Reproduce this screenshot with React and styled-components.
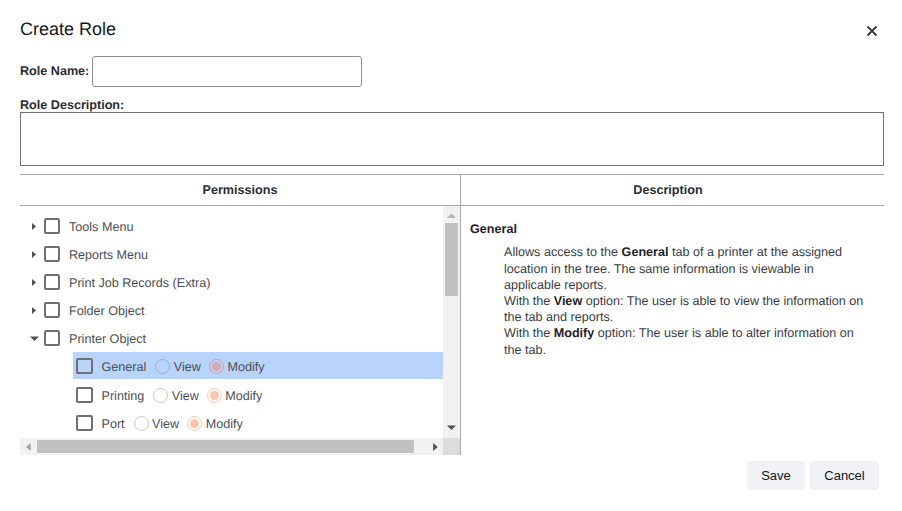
import React from "react";
import styled, { createGlobalStyle } from "styled-components";

const Global = createGlobalStyle`
  html, body { margin: 0; padding: 0; background: #fff; }
  body { font-family: "Liberation Sans", Arial, sans-serif; color: #1f2229; text-rendering: geometricPrecision; }
  * { box-sizing: border-box; }
`;

const Dialog = styled.div`
  width: 902px;
  height: 511px;
  padding: 0 18px 0 20px;
  display: flex;
  flex-direction: column;
  overflow: hidden;
`;
const TitleBar = styled.div`
  height: 56px;
  display: flex;
  justify-content: space-between;
  align-items: flex-start;
`;
const Title = styled.h1`
  margin: 19px 0 0;
  font-size: 18px;
  line-height: 21px;
  font-weight: 400;
  color: #14171f;
`;
const Close = styled.button`
  border: 0;
  background: none;
  padding: 0;
  margin: 25px 6px 0 0;
  width: 12px;
  height: 12px;
  display: block;
  color: #33363d;
  svg { display: block; }
`;
const NameRow = styled.div`
  display: flex;
  align-items: center;
  height: 31px;
  gap: 3px;
`;
const Label = styled.label`
  font-size: 12.6px;
  font-weight: 700;
  line-height: 15px;
  color: #2a2d35;
`;
const NameInput = styled.div`
  width: 270px;
  height: 31px;
  border: 1px solid #8f8f8f;
  border-radius: 3px;
`;
const DescLabel = styled(Label)`
  display: block;
  margin-top: 11px;
  height: 14px;
`;
const DescBox = styled.div`
  width: 864px;
  height: 54px;
  border: 1px solid #6f6f6f;
`;
const Table = styled.div`
  width: 864px;
  margin-top: 8px;
  border-top: 1px solid #a9a9a9;
  display: grid;
  grid-template-columns: 440px 1fr;
  grid-template-rows: 31px 249px;
`;
const HeadCell = styled.div`
  border-bottom: 1px solid #a9a9a9;
  border-left: ${(p) => (p.$divider ? "1px solid #a9a9a9" : "0")};
  padding-right: ${(p) => (p.$divider ? 9 : 0)}px;
  font-size: 12.6px;
  font-weight: 700;
  color: #2a2d35;
  display: flex;
  align-items: center;
  justify-content: center;
`;
const TreePane = styled.div`
  display: grid;
  grid-template-columns: 423px 17px;
  grid-template-rows: 232px 17px;
`;
const Viewport = styled.div`
  overflow: hidden;
  padding-top: 6px;
`;
const Row = styled.div`
  height: 28px;
  display: flex;
  align-items: center;
  padding-left: 10px;
  font-size: 12.6px;
  color: #4b4e55;
`;
const Caret = styled.span`
  width: 14px;
  display: flex;
  justify-content: flex-start;
  padding-left: ${(p) => p.$inset}px;
  svg { display: block; }
`;
const Box = styled.span`
  width: ${(p) => p.$w || 16}px;
  height: 16px;
  border: 2px solid #707070;
  border-radius: 2px;
  flex: none;
  background: ${(p) => (p.$active ? "transparent" : "#fff")};
`;
const RowLabel = styled.span`
  margin-left: 9px;
  padding-top: 2px;
`;
const Child = styled.div`
  margin-left: 53px;
  height: ${(p) => p.$h}px;
  margin-top: ${(p) => p.$mt || 0}px;
  display: flex;
  align-items: center;
  padding-left: 3px;
  padding-top: ${(p) => (p.$active ? 1 : 0)}px;
  font-size: 12.6px;
  color: #4b4e55;
  background: ${(p) => (p.$active ? "#b9d4fb" : "transparent")};
`;
const ChildLabel = styled.span`
  margin-left: 8.5px;
  margin-right: 9px;
  padding-top: 1px;
`;
const Radio = styled.span`
  width: 15px;
  height: 15px;
  border-radius: 50%;
  border: 1px solid ${(p) => p.$border};
  background: ${(p) => p.$bg || "transparent"};
  flex: none;
  display: flex;
  align-items: center;
  justify-content: center;
  margin-right: 3.5px;
  &::after {
    content: "";
    display: ${(p) => (p.$dot ? "block" : "none")};
    width: 9px;
    height: 9px;
    border-radius: 50%;
    background: ${(p) => p.$dot};
  }
`;
const RadioText = styled.span`
  margin-right: 8px;
  padding-top: 1px;
`;
const VTrack = styled.div`
  background: #f1f1f1;
  display: flex;
  flex-direction: column;
  align-items: center;
  position: relative;
`;
const VThumb = styled.div`
  width: 13px;
  height: 73px;
  background: #c1c1c1;
  margin-top: 17px;
`;
const ArrowSpot = styled.span`
  position: absolute;
  display: block;
  line-height: 0;
  ${(p) => p.$pos}
`;
const HTrack = styled.div`
  background: #f1f1f1;
  display: flex;
  align-items: center;
  padding-left: 17px;
  position: relative;
`;
const HThumb = styled.div`
  width: 377px;
  height: 13px;
  background: #c1c1c1;
`;
const Corner = styled.div`
  background: #dcdcdc;
`;
const DescPane = styled.div`
  border-left: 1px solid #a9a9a9;
  padding: 15px 18px 0 9px;
  font-size: 12.6px;
  line-height: 16px;
  color: #3a3d45;
`;
const DescTitle = styled.div`
  font-weight: 700;
  color: #1f2229;
  line-height: 16px;
`;
const DescBody = styled.div`
  margin-top: 7.4px;
  padding-left: 34px;
  line-height: 16.2px;
  b { color: #1f2229; }
`;
const Footer = styled.div`
  display: flex;
  justify-content: flex-end;
  gap: 5px;
  margin-top: 6px;
  padding-right: 5px;
`;
const Btn = styled.button`
  width: ${(p) => p.$w}px;
  height: 29px;
  border: 0;
  border-radius: 4px;
  background: #f0f2f5;
  font: 400 13px "Liberation Sans", Arial, sans-serif;
  color: #14171f;
  padding: 0;
`;

const Tri = ({ dir, size = 7, color = "#505050" }) => {
  const pts = {
    right: "1,0 5,3.5 1,7",
    left: "5,0 1,3.5 5,7",
    down: "0,2 7,2 3.5,5.5",
    up: "0,5.5 7,5.5 3.5,2",
  }[dir];
  return (
    <svg width={size} height={size} viewBox="0 0 7 7">
      <polygon points={pts} fill={color} />
    </svg>
  );
};

const tops = ["Tools Menu", "Reports Menu", "Print Job Records (Extra)", "Folder Object"];

const Perm = ({ name, active, mt, h }) => (
  <Child $active={active} $mt={mt} $h={h}>
    <Box $w={17} $active={active} />
    <ChildLabel>{name}</ChildLabel>
    <Radio $border={active ? "#98aeca" : "#c9c9c9"} />
    <RadioText>View</RadioText>
    <Radio
      $border={active ? "#d49ca0" : "#f6c9b8"}
      $dot={active ? "#d3a9b0" : "#fbc4ae"}
    />
    <RadioText>Modify</RadioText>
  </Child>
);

export default function App() {
  return (
    <Dialog>
      <Global />
      <TitleBar>
        <Title>Create Role</Title>
        <Close aria-label="Close">
          <svg width="12" height="12" viewBox="0 0 12 12">
            <path d="M1.5 1.5 10.5 10.5M10.5 1.5 1.5 10.5" stroke="currentColor" strokeWidth="1.8" fill="none" />
          </svg>
        </Close>
      </TitleBar>
      <NameRow>
        <Label>Role Name:</Label>
        <NameInput />
      </NameRow>
      <DescLabel>Role Description:</DescLabel>
      <DescBox />
      <Table>
        <HeadCell>Permissions</HeadCell>
        <HeadCell $divider>Description</HeadCell>
        <TreePane>
          <Viewport>
            {tops.map((t) => (
              <Row key={t}>
                <Caret $inset={1}><Tri dir="right" /></Caret>
                <Box />
                <RowLabel>{t}</RowLabel>
              </Row>
            ))}
            <Row>
              <Caret $inset={0}><Tri dir="down" size={9} /></Caret>
              <Box />
              <RowLabel>Printer Object</RowLabel>
            </Row>
            <Perm name="General" active h={27} />
            <Perm name="Printing" mt={2} h={28} />
            <Perm name="Port" h={28} />
          </Viewport>
          <VTrack>
            <ArrowSpot $pos="top: 5px; left: 4px;"><Tri dir="up" size={9} color="#b5b5b5" /></ArrowSpot>
            <VThumb />
            <ArrowSpot $pos="bottom: 6px; left: 4px;"><Tri dir="down" size={9} /></ArrowSpot>
          </VTrack>
          <HTrack>
            <ArrowSpot $pos="left: 5px; top: 5px;"><Tri dir="left" size={8} color="#a0a0a0" /></ArrowSpot>
            <HThumb />
            <ArrowSpot $pos="right: 3px; top: 5px;"><Tri dir="right" size={8} /></ArrowSpot>
          </HTrack>
          <Corner />
        </TreePane>
        <DescPane>
          <DescTitle>General</DescTitle>
          <DescBody>
            Allows access to the <b>General</b> tab of a printer at the assigned location in the tree. The same information is viewable in applicable reports.
            <br />
            With the <b>View</b> option: The user is able to view the information on the tab and reports.
            <br />
            With the <b>Modify</b> option: The user is able to alter information on the tab.
          </DescBody>
        </DescPane>
      </Table>
      <Footer>
        <Btn $w={58}>Save</Btn>
        <Btn $w={69}>Cancel</Btn>
      </Footer>
    </Dialog>
  );
}
